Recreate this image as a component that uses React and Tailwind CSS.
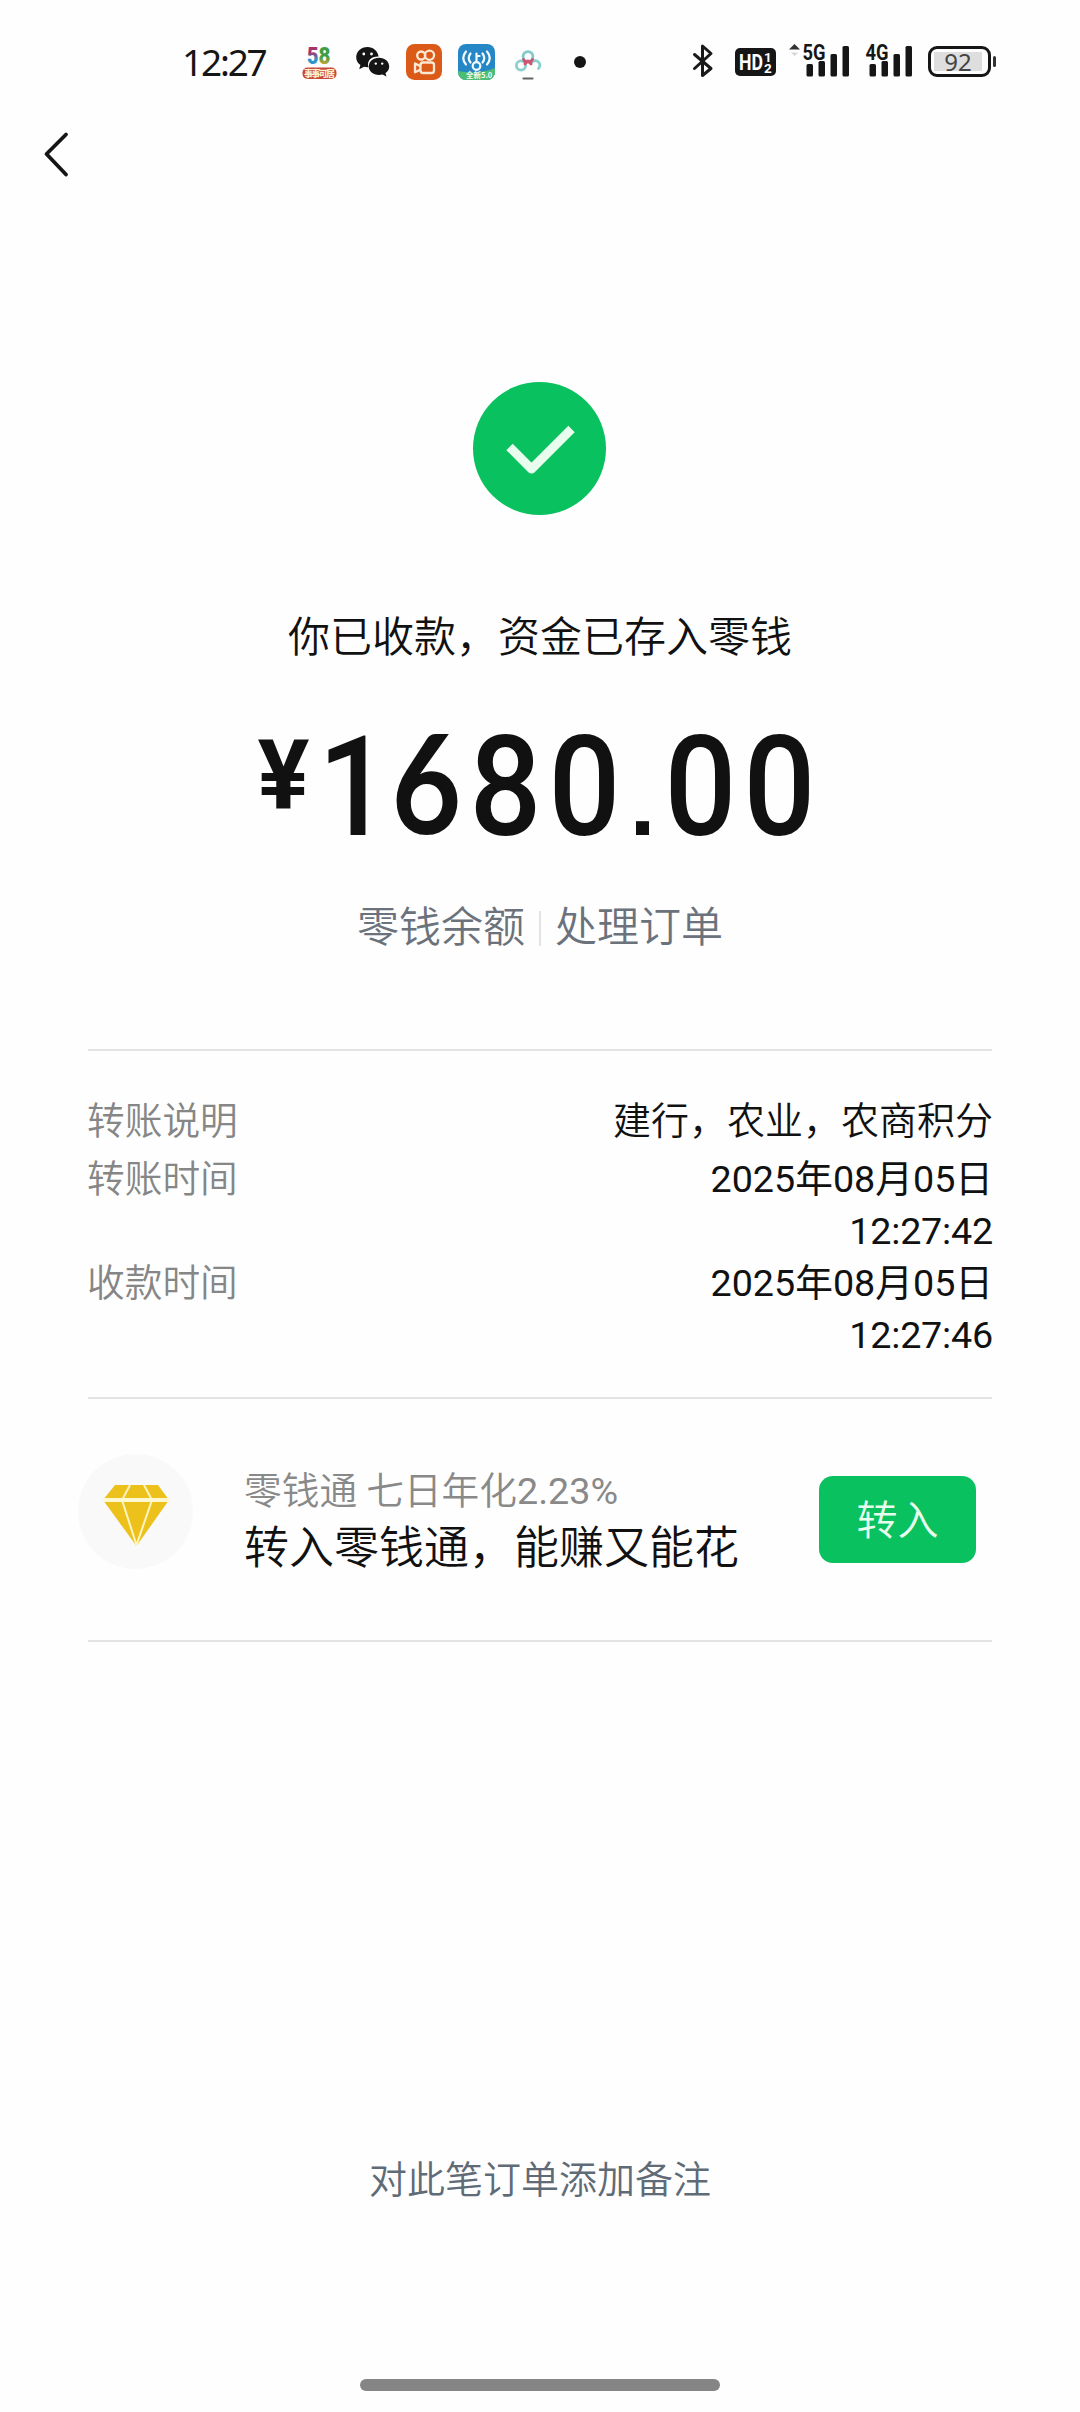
import React from 'react';

// --- 狀態列圖示 ---
const Logo58 = () => (
    <svg width="36" height="36" viewBox="0 0 36 36" className="overflow-visible">
        <defs>
            <linearGradient id="five" x1="0" y1="0" x2="0" y2="1">
                <stop offset="0.35" stopColor="#a8336c" />
                <stop offset="0.6" stopColor="#2b94c9" />
            </linearGradient>
            <linearGradient id="eight" x1="0" y1="0" x2="0" y2="1">
                <stop offset="0.5" stopColor="#3f9e46" />
                <stop offset="0.75" stopColor="#b9a43c" />
            </linearGradient>
        </defs>
        <text x="6" y="20" fontFamily="Roboto" fontWeight="900" fontSize="23" textLength="11.500" lengthAdjust="spacingAndGlyphs" fill="url(#five)">5</text>
        <text x="17.500" y="20" fontFamily="Roboto" fontWeight="900" fontSize="23" textLength="12" lengthAdjust="spacingAndGlyphs" fill="url(#eight)">8</text>
        <rect x="1.500" y="23.500" width="34" height="11.500" rx="5" fill="#c8483a" />
        <text x="3" y="32.600" fontFamily="Noto Sans CJK SC" fontWeight="900" fontSize="9" textLength="31" fill="#fbeecb">事事可居</text>
    </svg>
);

const WeChat = () => (
    <svg width="36" height="36" viewBox="0 0 36 36" fill="#151515">
        <path d="M12.500 3C6 3 1.200 7.600 1.200 13.200c0 3.300 1.600 5.900 4.200 7.700l-1.200 4.300 4.800-2.400c1.500.4 3 .5 4.500.4C11.500 17 16 12.300 23.600 12.500 22.700 7 18.300 3 12.500 3z" />
        <path d="M24 13.800c-5.900 0-10.200 3.900-10.200 8.600s4.300 8.500 10.200 8.500c1.300 0 2.500-.2 3.600-.5l3.800 2.100-.9-3.400c2.300-1.600 3.700-4 3.700-6.700C34.200 17.700 29.800 13.800 24 13.800z" />
        <g fill="#fff">
            <circle cx="8.800" cy="10" r="1.400" />
            <circle cx="16.500" cy="10" r="1.400" />
            <circle cx="20.800" cy="19.600" r="1.200" />
            <circle cx="27.200" cy="19.600" r="1.200" />
        </g>
    </svg>
);

const Kuaishou = () => (
    <svg width="36" height="36" viewBox="0 0 36 36" fill="none" stroke="#fbe9d3" strokeWidth="2.300" strokeLinejoin="round">
        <rect width="36" height="36" rx="8.500" fill="#dc5a17" stroke="none" />
        <circle cx="15.200" cy="11.500" r="4" />
        <circle cx="23.500" cy="11.200" r="4.600" />
        <rect x="14.500" y="18.500" width="13.500" height="10.500" rx="2.500" />
        <path d="M14.500 22.200l-5.500-2.700v8.800l5.500-2.700" />
    </svg>
);

const WifiKey = () => (
    <svg width="37" height="36" viewBox="0 0 37 36" fill="none" stroke="#f2fbff" strokeWidth="2.200" strokeLinecap="round" className="overflow-visible">
        <clipPath id="wifi-clip"><rect width="37" height="36" rx="8" /></clipPath>
        <g clipPath="url(#wifi-clip)">
            <rect width="37" height="36" fill="#2587c6" stroke="none" />
            <path d="M0 27q20 4 37 -3v12H0z" fill="#4dbd74" stroke="none" />
        </g>
        <circle cx="18.500" cy="22" r="3.800" />
        <path d="M18.500 18V9.500M18.500 12h3" />
        <path d="M12.500 9.500q-3.500 4.500 0 9M8 7.500q-5.500 6.500 0 13M24.500 9.500q3.500 4.500 0 9M29 7.500q5.500 6.500 0 13" />
        <text x="8" y="34" fontFamily="Noto Sans CJK SC" fontWeight="700" fontSize="7.500" fill="#f4fff4" stroke="none">全新5.0</text>
    </svg>
);

const CloudDisk = () => (
    <svg width="30" height="36" viewBox="0 0 30 36" fill="none" strokeWidth="2.800" strokeLinecap="round">
        <circle cx="15" cy="12.500" r="4.900" stroke="#83c9cb" />
        <circle cx="8" cy="21.500" r="4.600" stroke="#8bd0cc" />
        <path d="M18 19.500a4.600 4.600 0 1 1 7.500 5" stroke="#8bd0cc" />
        <path d="M10.500 15.500l2 3l2.500-1.500l2.500 1.500l2-3M12 20l3-3l3 3" stroke="#cf5476" strokeLinejoin="round" />
        <path d="M10.500 34.500h9" stroke="#636363" strokeWidth="2.200" />
    </svg>
);

const Bluetooth = () => (
    <svg width="24" height="36" viewBox="0 0 24 36" fill="none" stroke="#1a1a1a" strokeWidth="3" strokeLinejoin="round" strokeLinecap="round">
        <path d="M3.500 10.500L20 24.500L11.500 31.500V2L20 9.500L3.500 24.500" />
    </svg>
);

const HdBadge = () => (
    <svg width="41" height="28" viewBox="0 0 41 28" fill="#fff" fontFamily="Roboto" fontWeight="700" className="overflow-visible">
        <rect width="41" height="28" rx="5" fill="#161616" />
        <text x="4" y="22" fontSize="22" textLength="24" lengthAdjust="spacingAndGlyphs">HD</text>
        <text x="29" y="13.500" fontSize="13.500">1</text>
        <text x="29" y="25" fontSize="13.500">2</text>
    </svg>
);

const Signal = ({ label, arrows }) => (
    <svg width="62" height="36" viewBox="0 0 62 36" fill="#161616" className="overflow-visible">
        {arrows && <path d="M0 5.500L5.500 0L11 5.500z" fill="#333" />}
        {arrows && <path d="M2 8.500h7L5.500 12z" fill="#d5d5d5" />}
        <text x="13.500" y="15.500" fontFamily="Roboto" fontWeight="700" fontSize="21.500" textLength="23" lengthAdjust="spacingAndGlyphs">{label}</text>
        <rect x="17.500" y="20" width="6.500" height="12.500" rx="1.500" />
        <rect x="29.500" y="17" width="6.500" height="15.500" rx="1.500" />
        <rect x="41.500" y="10" width="6.500" height="22.500" rx="1.500" />
        <rect x="53.500" y="2" width="6.500" height="30.500" rx="1.500" />
    </svg>
);

const Gem = () => (
    <svg width="66" height="61" viewBox="0 0 66 61">
        <path d="M12 0H55L66 15L33.500 61L0 15z" fill="#edc11c" />
        <path d="M27 0L19 15L33.500 60L49 15L41 0" fill="none" stroke="#fdf5bd" strokeWidth="2" />
        <path d="M0 15H66" stroke="#fdf8cf" strokeWidth="4" />
    </svg>
);

const StatusBar = () => (
    <div className="flex h-[124px] pt-[44px] pl-[182px] text-[#161616]">
        <div className="w-[119px] h-9 leading-9 text-[37px] tracking-[-2.2px] font-['Noto_Sans',sans-serif]">12:27</div>
        <div className="flex w-[390px] h-9">
            <div className="w-[54px]"><Logo58 /></div>
            <div className="w-[51px]"><WeChat /></div>
            <div className="w-[52px]"><Kuaishou /></div>
            <div className="w-[55px]"><WifiKey /></div>
            <div className="w-[61px]"><CloudDisk /></div>
            <div className="w-3 h-3 mt-3 rounded-full bg-[#151515]" />
        </div>
        <div className="w-[44px]"><Bluetooth /></div>
        <div className="mt-1 w-[41px]"><HdBadge /></div>
        <div className="ml-[13px] w-[63px]"><Signal label="5G" arrows /></div>
        <div className="w-[76px]"><Signal label="4G" /></div>
        <div className="flex items-center mt-[2px] h-[31px]">
            <div className="w-[63px] h-[31px] rounded-[9px] border-[3px] border-[#161616] p-[3px]">
                <div className="w-[48px] h-full bg-[#dedede] flex items-center justify-center text-[24px] leading-none text-[#444] font-['Noto_Sans',sans-serif]">92</div>
            </div>
            <div className="ml-[2px] w-[3px] h-[11px] rounded-sm bg-[#333]" />
        </div>
    </div>
);

const Amount = ({ value }) => (
    <div className="flex h-[140px] font-medium">
        <span className="w-[49px] mt-[13px] flex justify-center text-[97px] leading-[97px] font-bold">¥</span>
        {value.split('').map((ch, i) => {
            if (ch === '.') {
                return <span key={i} className="w-[37px] flex justify-center text-[92px] leading-[178px] font-bold font-['Liberation_Sans']">.</span>;
            }
            if (ch === '6') {
                return <span key={i} className="w-[79px] flex justify-center text-[137px] leading-[134px] scale-x-[0.88] font-bold font-['Lato']">6</span>;
            }
            if (ch === '1') {
                return <span key={i} className="w-[79px] pl-[14px] flex justify-center text-[139px] leading-[148px] scale-x-[0.91]">1</span>;
            }
            return <span key={i} className="w-[79px] flex justify-center text-[139px] leading-[148px] scale-x-[0.91]">{ch}</span>;
        })}
    </div>
);

const rows = [
    { label: '转账说明', lines: ['建行，农业，农商积分'], pad: 'pb-[6px]' },
    { label: '转账时间', lines: ['2025年08月05日', '12:27:42'], pad: '' },
    { label: '收款时间', lines: ['2025年08月05日', '12:27:46'], pad: '' },
];

const lineStyle = (line) => {
    if (line.includes('，')) return 'font-[350] text-[38px]';
    if (line.includes(':')) return 'tracking-[-0.2px]';
    return '';
};

export default function App() {
    return (
        <div className="w-[1080px] h-[2412px] bg-[#fefefe] text-[#111] flex flex-col overflow-hidden font-['Roboto','Noto_Sans_CJK_SC',sans-serif]">
            <StatusBar />

            <div className="h-[258px] pl-[40px] pt-[6px]">
                <svg width="32" height="48" viewBox="0 0 32 48" fill="none" stroke="#151515" strokeWidth="3.800" strokeLinecap="round" strokeLinejoin="round">
                    <path d="M26 4.500L6.500 24L26 44.500" />
                </svg>
            </div>

            {/* 收款結果 */}
            <div className="flex flex-col items-center">
                <div className="w-[133px] h-[133px] mr-[2px] rounded-full bg-[#0ac160]">
                    <svg width="133" height="133" viewBox="0 0 133 133" fill="none" stroke="#e9fdef" strokeWidth="9" strokeLinejoin="round">
                        <path d="M36.500 65L58.500 87L98.500 47" />
                    </svg>
                </div>
                <div className="mt-[93px] h-[60px] leading-[60px] text-[42px] font-[350]">你已收款，资金已存入零钱</div>
                <div className="mt-[46px] mr-[2px]"><Amount value="1680.00" /></div>
                <div className="mt-[44px] h-[60px] flex items-center text-[42px] leading-[60px] text-[#6b727c] font-[350]">
                    <span>零钱余额</span>
                    <span className="mx-[14px] w-[2px] h-[35px] bg-[#e3e3e3]" />
                    <span>处理订单</span>
                </div>
            </div>

            {/* 轉帳明細 */}
            <div className="mt-[91px] mx-[88px] h-[348px] border-t-2 border-[#e3e3e3] pt-[44px] text-[37.700px] leading-[52px]">
                {rows.map((row) => (
                    <div key={row.label} className={`flex justify-between ${row.pad}`}>
                        <span className="-ml-px text-[#868686] font-[350]">{row.label}</span>
                        <div className="flex flex-col items-end -mr-px">
                            {row.lines.map((line) => (
                                <span key={line} className={lineStyle(line)}>{line}</span>
                            ))}
                        </div>
                    </div>
                ))}
            </div>

            {/* 零錢通 */}
            <div className="mx-[88px] h-[245px] border-y-2 border-[#e3e3e3] flex">
                <div className="-ml-[10px] mt-[55px] w-[115px] h-[115px] rounded-full bg-[#f9f9f9] flex items-center justify-center pt-[7px]">
                    <Gem />
                </div>
                <div className="ml-[51px] mt-[66px] w-[575px]">
                    <div className="text-[37.700px] leading-[52px] text-[#898989] font-[350]">零钱通 七日年化<span className="font-normal">2.23%</span></div>
                    <div className="mt-[2px] text-[45px] leading-[60px] font-[350]">转入零钱通，能赚又能花</div>
                </div>
                <button className="mt-[77px] w-[157px] h-[87px] rounded-[14px] bg-[#0ac160] text-[#e9fdef] text-[41px] leading-[91px] font-[350]">转入</button>
            </div>

            <div className="mt-[510px] h-[56px] text-center text-[38px] leading-[56px] text-[#5f6b76] font-[350]">对此笔订单添加备注</div>
            <div className="mt-[171px] mx-auto w-[360px] h-3 shrink-0 rounded-full bg-[#858585]" />
        </div>
    );
}
